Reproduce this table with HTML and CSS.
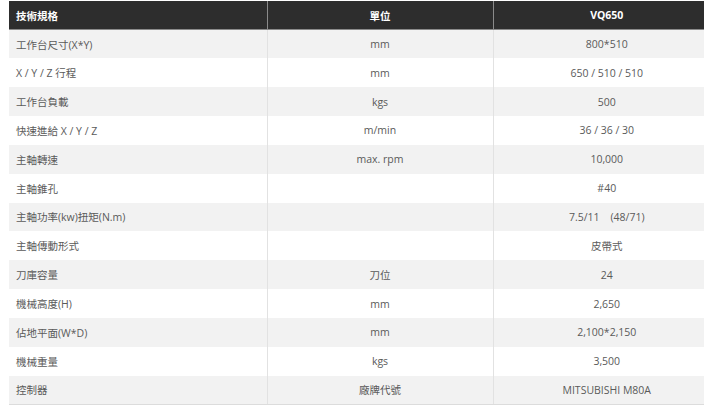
FILE: index.html
```html
<!DOCTYPE html>
<html lang="zh-Hant">
<head>
<meta charset="utf-8">
<link rel="stylesheet" href="styles.css">
</head>
<body>
<div class="wrap">
<table class="spec">
<colgroup><col class="c1"><col class="c2"><col class="c3"></colgroup>
<thead>
<tr><th class="left">技術規格</th><th>單位</th><th>VQ650</th></tr>
</thead>
<tbody>
<tr><td class="left">工作台尺寸(X*Y)</td><td>mm</td><td>800*510</td></tr>
<tr><td class="left">X / Y / Z 行程</td><td>mm</td><td>650 / 510 / 510</td></tr>
<tr><td class="left">工作台負載</td><td>kgs</td><td>500</td></tr>
<tr><td class="left">快速進給 X / Y / Z</td><td>m/min</td><td>36 / 36 / 30</td></tr>
<tr><td class="left">主軸轉速</td><td>max. rpm</td><td>10,000</td></tr>
<tr><td class="left">主軸錐孔</td><td></td><td>#40</td></tr>
<tr><td class="left">主軸功率(kw)扭矩(N.m)</td><td></td><td>7.5/11&nbsp;&nbsp;&nbsp;&nbsp;(48/71)</td></tr>
<tr><td class="left">主軸傳動形式</td><td></td><td>皮帶式</td></tr>
<tr><td class="left">刀庫容量</td><td>刀位</td><td>24</td></tr>
<tr><td class="left">機械高度(H)</td><td>mm</td><td>2,650</td></tr>
<tr><td class="left">佔地平面(W*D)</td><td>mm</td><td>2,100*2,150</td></tr>
<tr><td class="left">機械重量</td><td>kgs</td><td>3,500</td></tr>
<tr><td class="left">控制器</td><td>廠牌代號</td><td>MITSUBISHI M80A</td></tr>
</tbody>
</table>
</div>
</body>
</html>
```
FILE: styles.css
```css
html, body {
  margin: 0;
  padding: 0;
  background: #fff;
  overflow: hidden;
}
.wrap {
  padding: 1px 0 0 9px;
  width: 720px;
}
.spec {
  border-collapse: collapse;
  table-layout: fixed;
  width: 711px;
  font-family: "Open Sans", "Noto Sans CJK TC", sans-serif;
  font-size: 10.5px;
  color: #5a5a5a;
}
.c1 { width: 258px; }
.c2 { width: 226px; }
.c3 { width: 227px; }
.spec th {
  background: #2d2d2d;
  color: #fff;
  font-weight: bold;
  height: 28px;
  padding: 0 7px;
  text-align: center;
  border-left: 1px solid #8a8a8a;
  border-bottom: 1px solid #8a8a8a;
}
.spec th:first-child { border-left: none; }
.spec td {
  height: 28.85px;
  padding: 0 7px;
  text-align: center;
  border-left: 1px solid #e2e2e2;
  box-sizing: border-box;
}
.spec td:first-child { border-left: none; }
.spec .left { text-align: left; }
.spec tbody tr:nth-child(odd) td { background: #f2f2f2; }
.spec tbody tr:last-child td { border-bottom: 1px solid #dcdcdc; }
```
